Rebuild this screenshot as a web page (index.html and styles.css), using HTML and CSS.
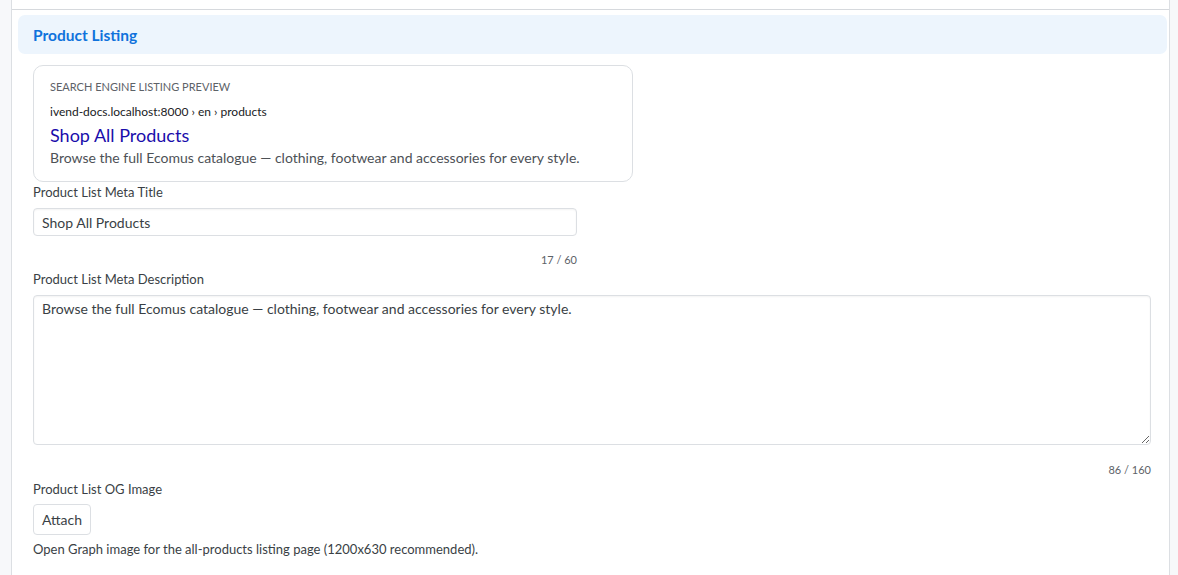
FILE: index.html
```html
<!DOCTYPE html>
<html>
  <head>
    <title>Product Listing SEO</title>
    <meta name="viewport" content="width=device-width, initial-scale=1.0" />
    <link rel="stylesheet" href="styles.css">
  </head>

  <body>
    <div class="page">
      <div class="top-strip"></div>
      <div class="section">
        <div class="section-head">
          <h2 class="section-title">Product Listing</h2>
        </div>
        <div class="section-body">
          <div class="preview-card">
            <div class="preview-label">Search Engine Listing Preview</div>
            <div class="preview-url">ivend-docs.localhost:8000 › en › products</div>
            <div class="preview-title">Shop All Products</div>
            <div class="preview-desc">Browse the full Ecomus catalogue — clothing, footwear and accessories for every style.</div>
          </div>

          <div class="field field-short">
            <label class="field-label">Product List Meta Title</label>
            <input class="control" type="text" value="Shop All Products" />
            <div class="counter">17 / 60</div>
          </div>

          <div class="field">
            <label class="field-label">Product List Meta Description</label>
            <textarea class="control area">Browse the full Ecomus catalogue — clothing, footwear and accessories for every style.</textarea>
            <div class="counter">86 / 160</div>
          </div>

          <div class="field">
            <label class="field-label">Product List OG Image</label>
            <button class="attach">Attach</button>
            <div class="help">Open Graph image for the all-products listing page (1200x630 recommended).</div>
          </div>
        </div>
      </div>
    </div>
  </body>
</html>
```

FILE: styles.css
```css
* {
  box-sizing: border-box;
}
body {
  margin: 0;
  background: #f7f8fa;
  font-family: Lato, "Liberation Sans", sans-serif;
  color: #3a3f45;
}
.page {
  margin: 0 8px 0 11px;
  min-height: 575px;
  background: #fff;
  border-left: 1px solid #dcdfe3;
  border-right: 1px solid #dcdfe3;
}
.top-strip {
  height: 10px;
  border-bottom: 1px solid #d6d9dd;
}
.section {
  padding: 5px 2px 0 6px;
}
.section-head {
  height: 39px;
  display: flex;
  align-items: center;
  padding: 0 15px;
  background: #edf5fd;
  border-radius: 7px;
}
.section-title {
  margin: 0;
  font-size: 15.5px;
  font-weight: 700;
  color: #0f72dc;
}
.section-body {
  padding: 11px 16px 0 15px;
}
.preview-card {
  width: 600px;
  height: 117px;
  padding: 14px 16px 0 16px;
  border: 1px solid #dcdfe3;
  border-radius: 10px;
}
.preview-label {
  font-size: 11px;
  text-transform: uppercase;
  color: #5d6268;
}
.preview-url {
  margin-top: 11px;
  font-size: 12px;
  color: #202124;
}
.preview-title {
  margin-top: 5px;
  font-size: 18px;
  color: #1a0dab;
}
.preview-desc {
  margin-top: 3px;
  font-size: 14px;
  color: #4d5156;
}
.field {
  display: flex;
  flex-direction: column;
  margin-top: 4px;
}
.field-short {
  width: 544px;
  margin-top: 1px;
}
.field-label {
  font-size: 13px;
  color: #3a3f45;
  line-height: 18px;
}
.control {
  margin-top: 7px;
  height: 28px;
  padding: 0 8px;
  font-family: inherit;
  font-size: 14px;
  color: #3a3f45;
  border: 1px solid #dcdfe3;
  border-radius: 4px;
  box-shadow: inset 0 1px 2px rgba(0, 0, 0, 0.05);
}
.area {
  height: 150px;
  padding: 4px 8px;
  resize: vertical;
}
.counter {
  margin-top: 17px;
  align-self: flex-end;
  font-size: 11px;
  color: #5d6268;
}
.area + .counter {
  margin-top: 18px;
}
.attach {
  margin-top: 6px;
  align-self: flex-start;
  height: 31px;
  padding: 0 8px;
  font-family: inherit;
  font-size: 14px;
  color: #3a3f45;
  background: #fff;
  border: 1px solid #dcdfe3;
  border-radius: 4px;
}
.help {
  margin-top: 6px;
  font-size: 13px;
  color: #3a3f45;
}
```
